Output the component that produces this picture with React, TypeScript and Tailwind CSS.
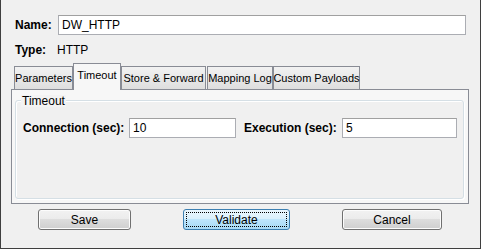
const tabs = [
  { label: 'Parameters', w: 'w-[59px]' },
  { label: 'Timeout', w: 'w-[48px]', active: true },
  { label: 'Store & Forward', w: 'w-[85px]' },
  { label: 'Mapping Log', w: 'w-[66px] ml-[1px]' },
  { label: 'Custom Payloads', w: 'w-[87px]' },
];

function TextBox({ value, className }: { value: string; className: string }) {
  return (
    <div
      className={`h-[20px] bg-white border border-[#abadb3] border-t-[#a0a0a0] flex items-center pl-[3px] text-black ${className}`}
    >
      {value}
    </div>
  );
}

function Button({ label, width, focused }: { label: string; width: string; focused?: boolean }) {
  if (focused) {
    return (
      <div
        className={`${width} h-[21px] rounded-[3px] border border-[#3c7fb1] bg-[linear-gradient(to_bottom,#eaf6fd_0%,#d9f0fc_50%,#bee6fd_50%,#a7d9f5_100%)] p-[2px]`}
      >
        <div className="h-full border border-dotted border-black flex items-center justify-center text-black">
          {label}
        </div>
      </div>
    );
  }
  return (
    <div
      className={`${width} h-[21px] rounded-[3px] border border-[#707070] bg-[linear-gradient(to_bottom,#f2f2f2_0%,#ebebeb_50%,#dddddd_50%,#cfcfcf_100%)] shadow-[inset_0_0_0_1px_#fcfcfc] flex items-center justify-center text-black`}
    >
      {label}
    </div>
  );
}

export default function App() {
  return (
    <div className="w-[481px] h-[249px] bg-[#f0f0f0] border-x border-b border-[#3f3f3f] flex flex-col font-['Liberation_Sans',sans-serif] text-[12px] text-black leading-none">
      {/* Name */}
      <div className="flex items-center mt-[15px] ml-[14px] mr-[14px]">
        <div className="w-[43px] font-bold">Name:</div>
        <TextBox value="DW_HTTP" className="flex-1" />
      </div>

      {/* Type */}
      <div className="flex items-center mt-[7px] ml-[14px] h-[15px]">
        <div className="w-[42px] font-bold">Type:</div>
        <div>HTTP</div>
      </div>

      {/* Tabs */}
      <div className="flex items-end mt-[6px] ml-[13px] h-[26px] relative z-10 text-[11px] whitespace-nowrap">
        {tabs.map((t) =>
          t.active ? (
            <div
              key={t.label}
              className={`${t.w} shrink-0 h-[27px] -mb-px bg-[#f7f7f7] border border-b-0 border-[#898c95] flex items-center justify-center pb-[3px]`}
            >
              {t.label}
            </div>
          ) : (
            <div
              key={t.label}
              className={`${t.w} shrink-0 h-[23px] bg-[linear-gradient(to_bottom,#f2f2f2,#dedede)] border border-b-0 border-[#898c95] flex items-center justify-center pt-[1px]`}
            >
              {t.label}
            </div>
          ),
        )}
      </div>

      {/* Tab panel */}
      <div className="ml-[10px] w-[458px] h-[115px] border border-[#898c95] bg-[#f7f7f7] pl-[3px] pt-[10px]">
        <div className="relative w-[449px] h-[99px] border border-[#d5dfe5] rounded-[3px] shadow-[inset_1px_1px_0_#ffffff,1px_1px_0_#ffffff] bg-[#f0f0f0]">
          <div className="absolute -top-[6px] left-[5px] px-[1px] bg-[#f3f3f3]">Timeout</div>
          <div className="flex items-center mt-[17px] ml-[7px]">
            <div className="w-[106px] font-bold">Connection (sec):</div>
            <TextBox value="10" className="w-[107px]" />
            <div className="w-[98px] ml-[8px] font-bold">Execution (sec):</div>
            <TextBox value="5" className="w-[115px]" />
          </div>
        </div>
      </div>

      {/* Buttons */}
      <div className="flex items-center mt-[5px] ml-[37px] gap-[52px]">
        <Button label="Save" width="w-[93px]" />
        <Button label="Validate" width="w-[107px]" focused />
        <Button label="Cancel" width="w-[100px]" />
      </div>
    </div>
  );
}
